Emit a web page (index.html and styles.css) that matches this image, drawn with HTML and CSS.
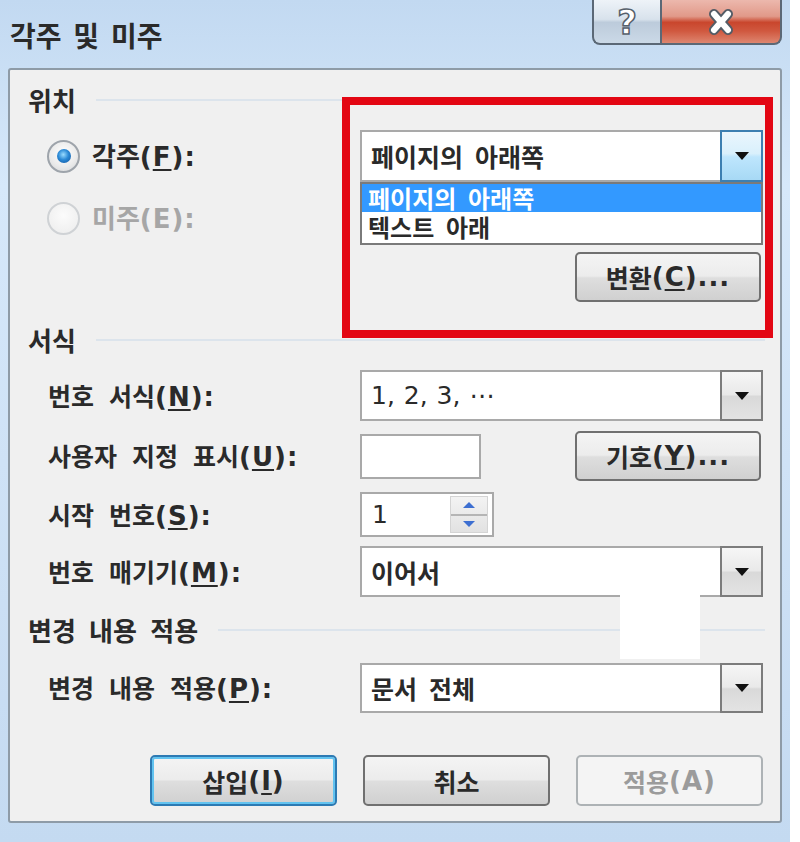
FILE: index.html
```html
<!DOCTYPE html>
<html lang="ko">
<head>
<meta charset="utf-8">
<title>각주 및 미주</title>
<link rel="stylesheet" href="styles.css">
</head>
<body>
<div class="window">
  <header class="titlebar">
    <div class="title">각주 및 미주</div>
    <div class="caps">
      <div class="cap cap-help"><span class="q">?</span></div>
      <div class="cap cap-close">
        <svg width="34" height="28" viewBox="0 0 34 28">
          <path d="M10 6 L24 22 M24 6 L10 22" stroke="#535c66" stroke-width="10" stroke-linecap="round" fill="none"/>
          <path d="M10 6 L24 22 M24 6 L10 22" stroke="#ffffff" stroke-width="6" stroke-linecap="round" fill="none"/>
        </svg>
      </div>
    </div>
  </header>

  <main class="panel">
    <div class="sec s1"><span class="sec-lbl">위치</span><span class="sec-line"></span></div>

    <div class="row r-fn">
      <div class="radio-lbl"><span class="radio on"></span><span class="lbl lbl-lg">각주<span class="m">(<u>F</u>):</span></span></div>
      <div class="combo">
        <span class="combo-text">페이지의 아래쪽</span>
        <span class="dd hot"><i class="tri"></i></span>
        <div class="list">
          <div class="item sel">페이지의 아래쪽</div>
          <div class="item">텍스트 아래</div>
        </div>
      </div>
    </div>

    <div class="row r-en">
      <div class="radio-lbl dis"><span class="radio"></span><span class="lbl lbl-lg">미주<span class="m">(E):</span></span></div>
    </div>

    <div class="row r-conv">
      <span></span>
      <div class="ctl-end"><button class="btn btn-side">변환<span class="m">(<u>C</u>)...</span></button></div>
    </div>

    <div class="sec s2"><span class="sec-lbl">서식</span><span class="sec-line"></span></div>

    <div class="row r-fmt">
      <span class="lbl">번호 서식<span class="m">(<u>N</u>):</span></span>
      <div class="combo">
        <span class="combo-text lat">1, 2, 3, ⋯</span>
        <span class="dd"><i class="tri"></i></span>
      </div>
    </div>

    <div class="row r-cust">
      <span class="lbl">사용자 지정 표시<span class="m">(<u>U</u>):</span></span>
      <div class="ctl-split">
        <span class="txt"></span>
        <button class="btn btn-side">기호<span class="m">(<u>Y</u>)...</span></button>
      </div>
    </div>

    <div class="row r-start">
      <span class="lbl">시작 번호<span class="m">(<u>S</u>):</span></span>
      <div class="spin">
        <span class="spin-val">1</span>
        <span class="spin-btns">
          <span class="spin-up"><i class="tri-up"></i></span>
          <span class="spin-dn"><i class="tri-dn"></i></span>
        </span>
      </div>
    </div>

    <div class="row r-numb">
      <span class="lbl">번호 매기기<span class="m">(<u>M</u>):</span></span>
      <div class="combo">
        <span class="combo-text">이어서</span>
        <span class="dd"><i class="tri"></i></span>
      </div>
    </div>

    <div class="sec s3"><span class="sec-lbl">변경 내용 적용</span><span class="sec-line"></span></div>

    <div class="row r-apply">
      <span class="lbl">변경 내용 적용<span class="m">(<u>P</u>):</span></span>
      <div class="combo">
        <span class="combo-text">문서 전체</span>
        <span class="dd"><i class="tri"></i></span>
      </div>
    </div>

    <div class="actions">
      <button class="btn btn-default">삽입<span class="m">(<u>I</u>)</span></button>
      <button class="btn">취소</button>
      <button class="btn btn-dis">적용<span class="m">(A)</span></button>
    </div>
  </main>

  <div class="redbox"></div>
  <div class="patch"></div>
</div>
</body>
</html>
```

FILE: styles.css
```css
* { box-sizing: border-box; }

body {
  margin: 0;
  background: #ffffff;
  font-family: "Noto Sans CJK KR", "Noto Sans", sans-serif;
  font-weight: bold;
  color: #2a2a2a;
}

.window {
  position: relative;
  width: 790px;
  height: 842px;
  overflow: hidden;
  background: linear-gradient(180deg, #c2d9f1 0%, #d6e8fa 22%, #cfe2f6 55%, #c4daf1 100%);
}

/* ---------- title bar ---------- */
.titlebar {
  height: 68px;
  display: flex;
  justify-content: space-between;
  align-items: flex-start;
}

.title {
  font-size: 28px;
  line-height: 34px;
  padding: 18px 0 0 10px;
  word-spacing: 4px;
  color: #2a2a2a;
}

.caps {
  display: flex;
  margin-right: 8px;
}

.cap {
  height: 45px;
  border: 2px solid #5b6876;
  border-top: none;
  display: flex;
  align-items: center;
  justify-content: center;
}

.cap-help {
  width: 68px;
  border-right: none;
  border-radius: 0 0 0 8px;
  background: linear-gradient(180deg, #eef3f8 0%, #d8e2ec 45%, #bccbdb 52%, #cbd9e7 100%);
}

.cap-close {
  width: 122px;
  border-radius: 0 0 8px 0;
  background: linear-gradient(180deg, #ecb8ad 0%, #e19989 38%, #c9462d 52%, #d0583f 72%, #de8670 100%);
}

.q {
  font-family: "DejaVu Sans", sans-serif;
  font-weight: bold;
  font-size: 34px;
  line-height: 1;
  color: #ffffff;
  -webkit-text-stroke: 1.5px #56606b;
}

/* ---------- panel ---------- */
.panel {
  margin-left: 8px;
  width: 774px;
  height: 755px;
  border: 2px solid #8e9ba7;
  border-radius: 3px;
  background: #f0f0f0;
  padding: 0 17px 0 18px;
  display: flex;
  flex-direction: column;
}

.sec {
  flex: none;
  height: 30px;
  display: flex;
  align-items: center;
}
.s1 { margin-top: 15px; }
.s2 { margin-top: 23px; }
.s3 { margin-top: 18px; }

.sec-lbl {
  font-size: 26px;
  line-height: 30px;
  word-spacing: 6px;
  white-space: nowrap;
}

.sec-line {
  flex: 1;
  height: 2px;
  margin-left: 20px;
  margin-right: -2px;
  background: #dce4ec;
}

.row {
  flex: none;
  display: grid;
  grid-template-columns: 312px 403px;
  grid-template-rows: 100%;
  align-items: center;
  padding-left: 20px;
}
.r-fn    { margin-top: 15px; height: 52px; }
.r-en    { margin-top: 10px; height: 52px; }
.r-conv  { margin-top: 8px;  height: 50px; }
.r-fmt   { margin-top: 15px; height: 51px; }
.r-cust  { margin-top: 10px; height: 50px; }
.r-start { margin-top: 11px; height: 45px; }
.r-numb  { margin-top: 9px;  height: 51px; }
.r-apply { margin-top: 18px; height: 50px; }

.lbl {
  font-size: 25px;
  line-height: 30px;
  word-spacing: 8px;
  white-space: nowrap;
}
.lbl-lg { font-size: 26px; }

.m {
  font-family: "DejaVu Sans", sans-serif;
  font-weight: bold;
  font-size: 26px;
  letter-spacing: 1px;
  word-spacing: 0;
}

u {
  text-decoration-thickness: 2px;
  text-underline-offset: 3px;
}

/* ---------- radio ---------- */
.radio-lbl {
  display: flex;
  align-items: center;
  gap: 12px;
  margin-left: -1px;
}

.radio {
  flex: none;
  width: 33px;
  height: 33px;
  border-radius: 50%;
  border: 2px solid #9ea4ab;
  background: radial-gradient(circle at 50% 40%, #ffffff 0%, #ececec 55%, #d2d4d6 100%);
  display: flex;
  align-items: center;
  justify-content: center;
}

.radio.on::after {
  content: "";
  width: 14px;
  height: 14px;
  border-radius: 50%;
  background: radial-gradient(circle at 45% 40%, #9adcff 0%, #2c8ad6 45%, #0b4f9a 100%);
}

.dis .radio {
  border-color: #cfd2d5;
  background: radial-gradient(circle at 50% 40%, #fbfbfb, #ececec);
}
.dis .lbl { color: #a6a6a6; }

/* ---------- combo ---------- */
.combo {
  position: relative;
  height: 100%;
  border: 2px solid #a9a9a9;
  background: #ffffff;
  display: flex;
  align-items: center;
}

.combo-text {
  flex: 1;
  padding-left: 9px;
  font-size: 25px;
  line-height: 30px;
  word-spacing: 5px;
  white-space: nowrap;
}

.lat {
  font-family: "DejaVu Sans", sans-serif;
  font-weight: normal;
  word-spacing: 1px;
}

.dd {
  align-self: stretch;
  width: 43px;
  margin: -2px -2px -2px 0;
  border: 2px solid #7c7c7c;
  background: linear-gradient(180deg, #f6f6f6 0%, #e9e9e9 48%, #d9d9d9 52%, #e3e3e3 100%);
  display: flex;
  align-items: center;
  justify-content: center;
}

.dd.hot {
  border-color: #3c7fb1;
  background: linear-gradient(180deg, #eaf6fd 0%, #d9f0fc 45%, #bee6fd 52%, #a7d9f5 100%);
}

.tri {
  width: 0;
  height: 0;
  border-left: 7px solid transparent;
  border-right: 7px solid transparent;
  border-top: 8px solid #111111;
}

.list {
  position: absolute;
  left: -2px;
  right: -2px;
  top: calc(100% + 2px);
  height: 63px;
  border: 2px solid #7a7a7a;
  background: #ffffff;
  z-index: 2;
}

.item {
  height: 28px;
  line-height: 28px;
  font-size: 24px;
  padding-left: 6px;
  word-spacing: 5px;
  white-space: nowrap;
}
.item + .item {
  height: 31px;
  line-height: 29px;
}
.item.sel {
  background: #3399ff;
  color: #ffffff;
}

/* ---------- other controls ---------- */
.ctl-end {
  display: flex;
  justify-content: flex-end;
  height: 100%;
}

.ctl-split {
  display: flex;
  justify-content: space-between;
  align-items: center;
  height: 100%;
}

.txt {
  width: 121px;
  height: 45px;
  border: 2px solid #a9a9a9;
  background: #ffffff;
}

.spin {
  width: 134px;
  height: 45px;
  border: 2px solid #a9a9a9;
  background: #ffffff;
  display: flex;
  align-items: center;
  justify-content: space-between;
  padding: 2px 4px 2px 0;
}

.spin-val {
  padding-left: 10px;
  font-family: "DejaVu Sans", sans-serif;
  font-weight: normal;
  font-size: 25px;
}

.spin-btns {
  width: 38px;
  height: 37px;
  display: flex;
  flex-direction: column;
  border: 1px solid #d4d4d4;
  background: linear-gradient(180deg, #f3f3f3, #e2e2e2);
}

.spin-up, .spin-dn {
  flex: 1;
  display: flex;
  align-items: center;
  justify-content: center;
}
.spin-up { border-bottom: 2px solid #b5b5b5; }

.tri-up {
  width: 0; height: 0;
  border-left: 6px solid transparent;
  border-right: 6px solid transparent;
  border-bottom: 6px solid #3d6fd1;
}
.tri-dn {
  width: 0; height: 0;
  border-left: 6px solid transparent;
  border-right: 6px solid transparent;
  border-top: 6px solid #3d6fd1;
}

/* ---------- buttons ---------- */
.btn {
  font: inherit;
  font-size: 25px;
  color: #2a2a2a;
  height: 50px;
  padding: 0;
  border: 2px solid #707070;
  border-radius: 5px;
  background: linear-gradient(180deg, #f4f4f4 0%, #ececec 48%, #dedede 52%, #d0d0d0 100%);
  display: flex;
  align-items: center;
  justify-content: center;
  white-space: nowrap;
}

.btn-side {
  width: 186px;
  margin-right: 2px;
}

.actions {
  flex: none;
  display: flex;
  justify-content: flex-end;
  gap: 26px;
  height: 51px;
  margin-top: 42px;
}
.actions .btn {
  width: 187px;
  height: 51px;
}

.btn-default {
  border-color: #2d7ab3;
  box-shadow: inset 0 0 0 2px #62c3f0;
}

.btn-dis {
  border-color: #adb2b5;
  background: #f4f4f4;
  color: #9b9b9b;
}

/* ---------- overlays ---------- */
.redbox {
  position: absolute;
  left: 342px;
  top: 97px;
  width: 431px;
  height: 241px;
  border: 8px solid #e30613;
  z-index: 5;
}

.patch {
  position: absolute;
  left: 620px;
  top: 592px;
  width: 80px;
  height: 67px;
  background: #ffffff;
  z-index: 5;
}
```
